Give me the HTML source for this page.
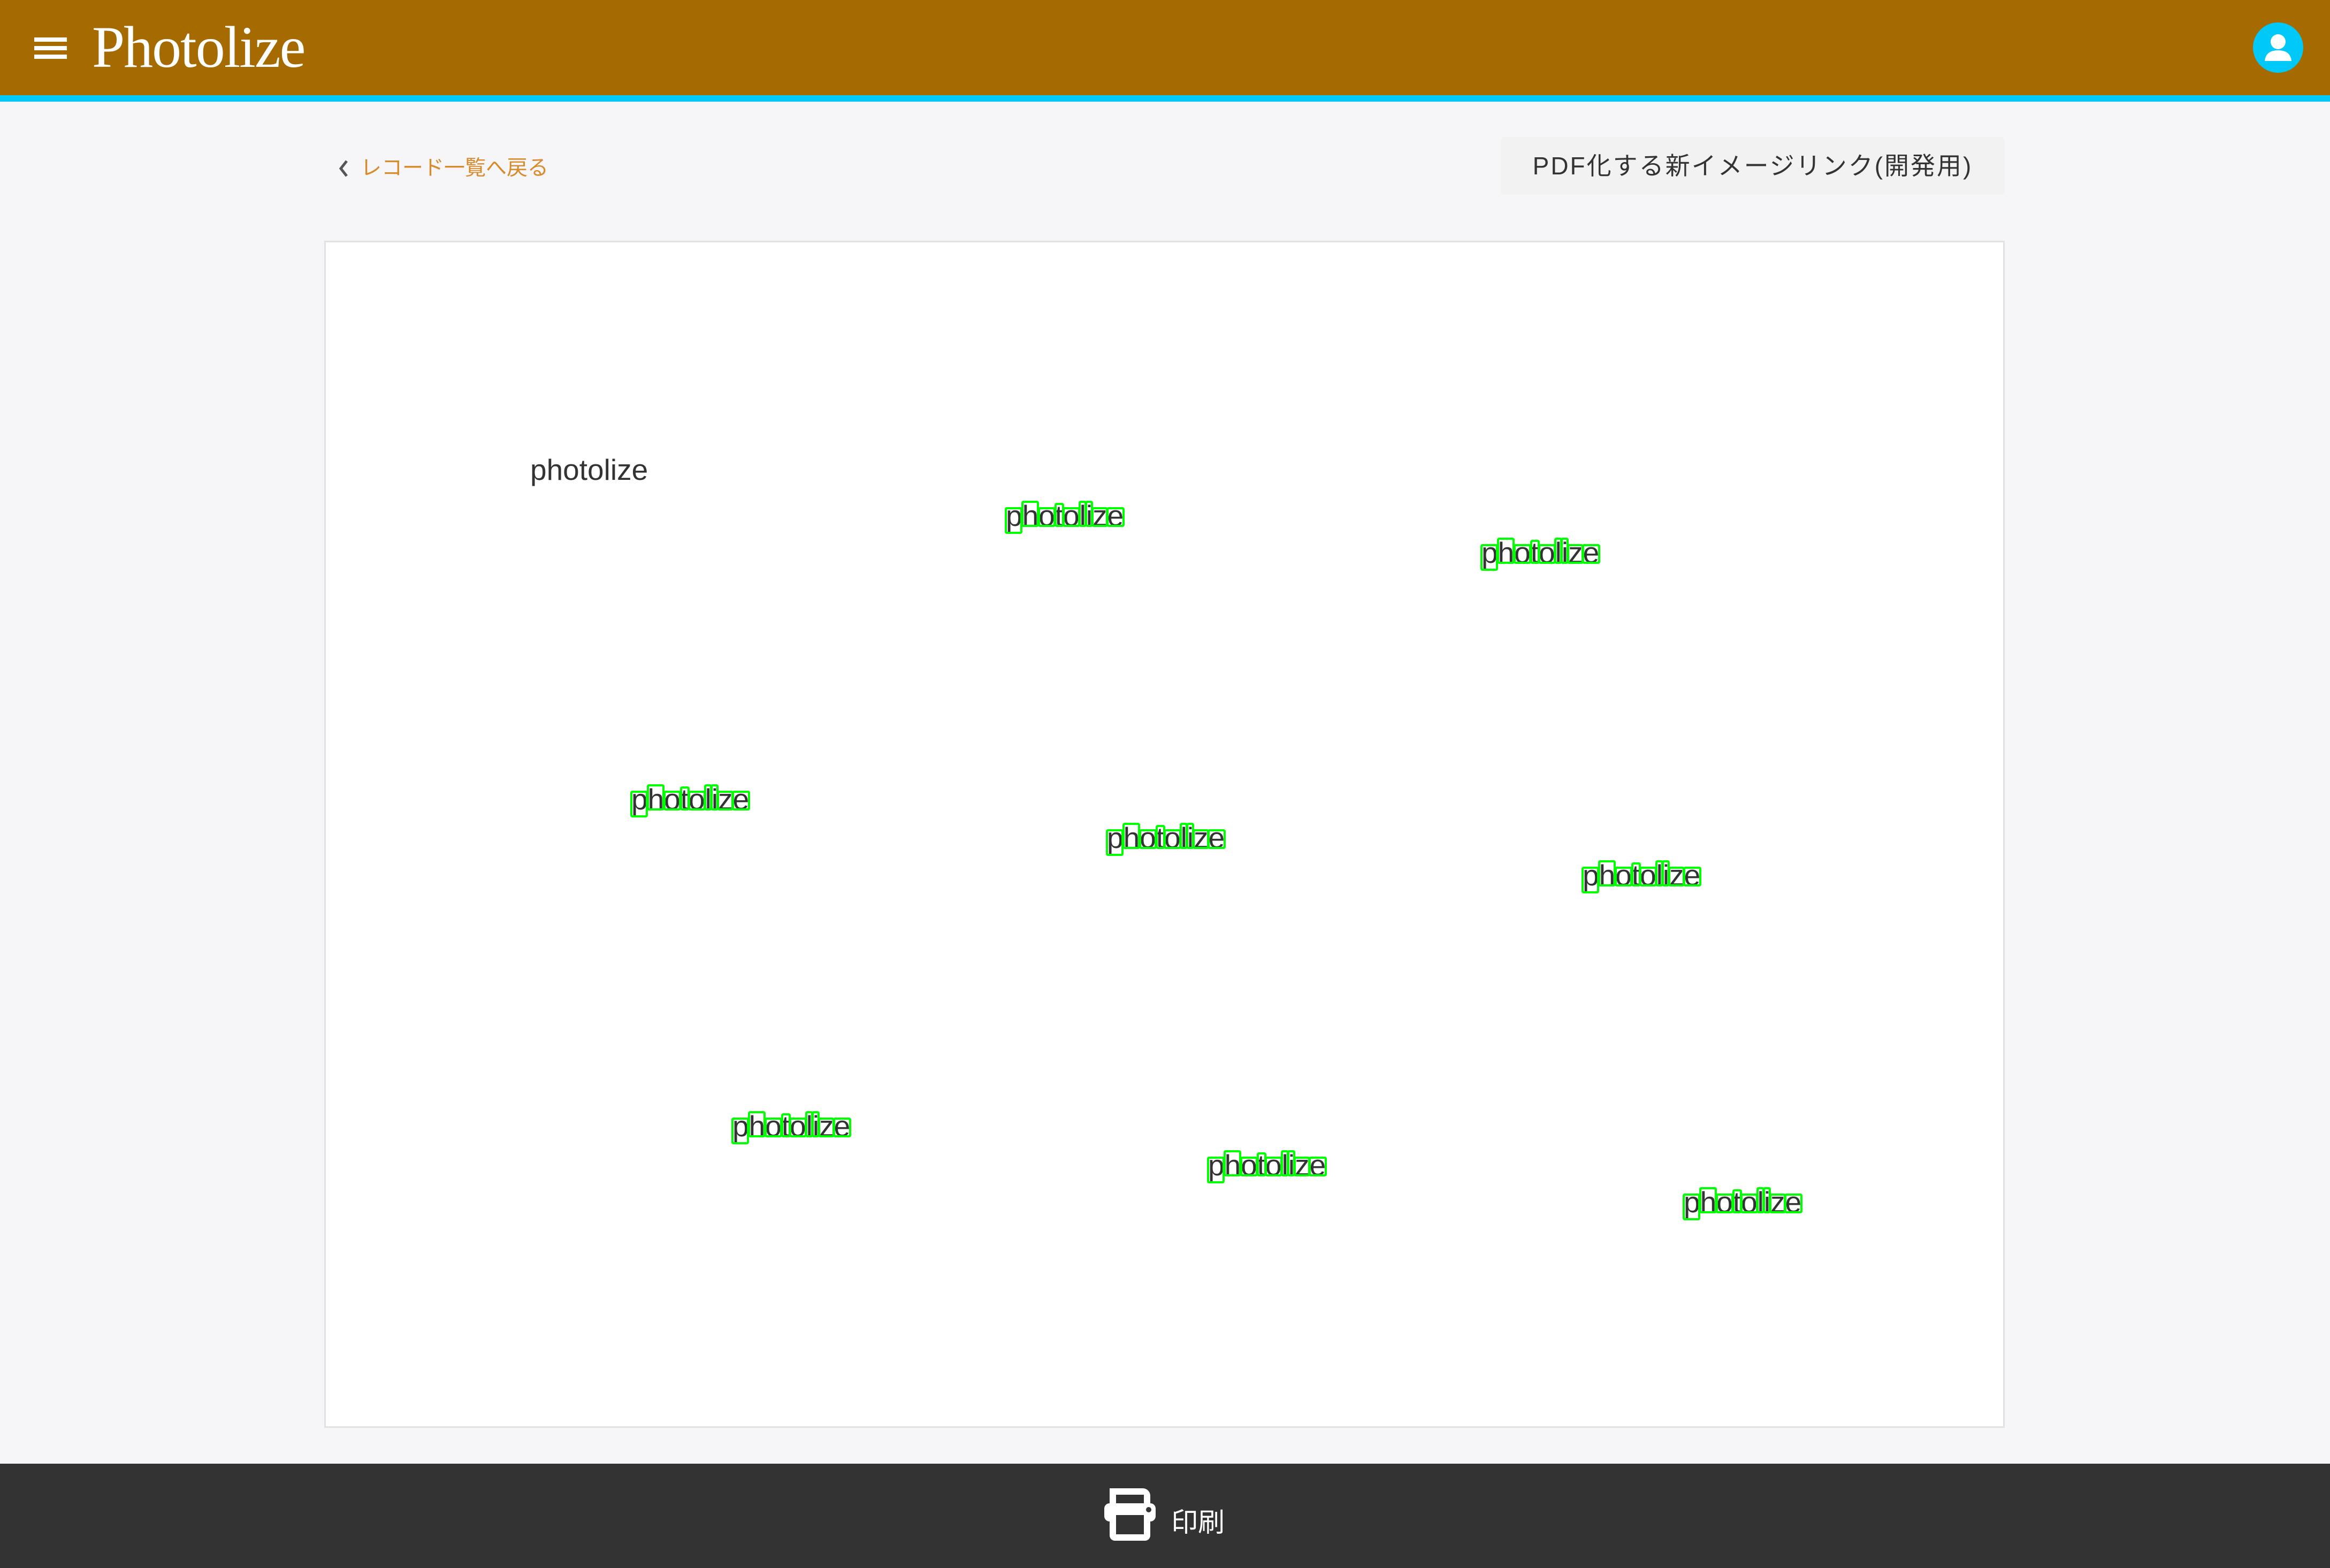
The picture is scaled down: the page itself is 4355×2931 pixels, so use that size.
<!DOCTYPE html>
<html><head><meta charset="utf-8"><style>
*{margin:0;padding:0;box-sizing:border-box}
body{width:4355px;height:2931px;background:#f6f6f8;position:relative;overflow:hidden;font-family:"Liberation Sans","Noto Sans CJK JP",sans-serif}
.hdr{position:absolute;left:0;top:0;width:4355px;height:178px;background:#a56a00}
.bl{position:absolute;left:0;top:178px;width:4355px;height:12px;background:#00c8f8}
.ham{position:absolute;left:64px;width:61px;height:8px;background:#fff}
.logo{position:absolute;left:172px;top:22px;font-family:"Liberation Serif",serif;font-size:110px;color:#fff;line-height:1.2;letter-spacing:-2px}
.av{position:absolute;left:4211px;top:42px;width:94px;height:94px;border-radius:50%;background:#00c8f8;overflow:hidden}
.back{position:absolute;left:628px;top:283px;font-size:39px;color:#d98a2a}
.btn{position:absolute;left:2805px;top:256px;width:942px;height:108px;background:#f2f2f3;border-radius:6px;font-size:46px;color:#333;line-height:108px;text-align:center;letter-spacing:3px}
.panel{position:absolute;left:606px;top:450px;width:3141px;height:2219px;background:#fff;border:3px solid #e2e2e2}
.ft{position:absolute;left:0;top:2736px;width:4355px;height:195px;background:#333}
.g{position:absolute;width:0;height:0}
.g .t{position:absolute;left:0;top:-46px;font-size:55px;line-height:55px;color:#333;white-space:nowrap}
.g b{position:absolute;border:4px solid #00ff00;border-radius:4px}
.x{top:-35px;height:37px}.a{top:-47px;height:49px}.d{top:-35px;height:50px}.tt{top:-43px;height:45px}
</style></head><body>
<div class="hdr"></div><div class="bl"></div>
<div class="ham" style="top:70px"></div><div class="ham" style="top:86px"></div><div class="ham" style="top:102px"></div>
<div class="logo">Photolize</div>
<div class="av"><svg width="94" height="94" viewBox="0 0 94 94"><circle cx="47" cy="36" r="14" fill="#fff"/><path d="M22 72 Q24 52 47 52 Q70 52 72 72 Z" fill="#fff"/></svg></div>
<div class="back"><svg width="30" height="40" viewBox="0 0 30 40" style="vertical-align:-8px;margin-right:16px"><path d="M20 6 L9 20 L20 34" stroke="#555" stroke-width="5" fill="none"/></svg>レコード一覧へ戻る</div>
<div class="btn">PDF化する新イメージリンク(開発用)</div>
<div class="panel"></div>
<div class="g" style="left:991px;top:897px"><div class="t">photolize</div></div>

<!-- template groups -->
<div class="g" style="left:1880px;top:983px"><div class="t">photolize</div><b class="d" style="left:-2px;width:33px"></b><b class="a" style="left:29px;width:33px"></b><b class="x" style="left:60px;width:33px"></b><b class="tt" style="left:91px;width:18px"></b><b class="x" style="left:106px;width:33px"></b><b class="a" style="left:136px;width:15px"></b><b class="a" style="left:148px;width:15px"></b><b class="x" style="left:160px;width:31px"></b><b class="x" style="left:188px;width:34px"></b></div>
<div class="g" style="left:2769px;top:1052px"><div class="t">photolize</div><b class="d" style="left:-2px;width:33px"></b><b class="a" style="left:29px;width:33px"></b><b class="x" style="left:60px;width:33px"></b><b class="tt" style="left:91px;width:18px"></b><b class="x" style="left:106px;width:33px"></b><b class="a" style="left:136px;width:15px"></b><b class="a" style="left:148px;width:15px"></b><b class="x" style="left:160px;width:31px"></b><b class="x" style="left:188px;width:34px"></b></div>
<div class="g" style="left:1180px;top:1513px"><div class="t">photolize</div><b class="d" style="left:-2px;width:33px"></b><b class="a" style="left:29px;width:33px"></b><b class="x" style="left:60px;width:33px"></b><b class="tt" style="left:91px;width:18px"></b><b class="x" style="left:106px;width:33px"></b><b class="a" style="left:136px;width:15px"></b><b class="a" style="left:148px;width:15px"></b><b class="x" style="left:160px;width:31px"></b><b class="x" style="left:188px;width:34px"></b></div>
<div class="g" style="left:2069px;top:1585px"><div class="t">photolize</div><b class="d" style="left:-2px;width:33px"></b><b class="a" style="left:29px;width:33px"></b><b class="x" style="left:60px;width:33px"></b><b class="tt" style="left:91px;width:18px"></b><b class="x" style="left:106px;width:33px"></b><b class="a" style="left:136px;width:15px"></b><b class="a" style="left:148px;width:15px"></b><b class="x" style="left:160px;width:31px"></b><b class="x" style="left:188px;width:34px"></b></div>
<div class="g" style="left:2958px;top:1655px"><div class="t">photolize</div><b class="d" style="left:-2px;width:33px"></b><b class="a" style="left:29px;width:33px"></b><b class="x" style="left:60px;width:33px"></b><b class="tt" style="left:91px;width:18px"></b><b class="x" style="left:106px;width:33px"></b><b class="a" style="left:136px;width:15px"></b><b class="a" style="left:148px;width:15px"></b><b class="x" style="left:160px;width:31px"></b><b class="x" style="left:188px;width:34px"></b></div>
<div class="g" style="left:1369px;top:2124px"><div class="t">photolize</div><b class="d" style="left:-2px;width:33px"></b><b class="a" style="left:29px;width:33px"></b><b class="x" style="left:60px;width:33px"></b><b class="tt" style="left:91px;width:18px"></b><b class="x" style="left:106px;width:33px"></b><b class="a" style="left:136px;width:15px"></b><b class="a" style="left:148px;width:15px"></b><b class="x" style="left:160px;width:31px"></b><b class="x" style="left:188px;width:34px"></b></div>
<div class="g" style="left:2258px;top:2197px"><div class="t">photolize</div><b class="d" style="left:-2px;width:33px"></b><b class="a" style="left:29px;width:33px"></b><b class="x" style="left:60px;width:33px"></b><b class="tt" style="left:91px;width:18px"></b><b class="x" style="left:106px;width:33px"></b><b class="a" style="left:136px;width:15px"></b><b class="a" style="left:148px;width:15px"></b><b class="x" style="left:160px;width:31px"></b><b class="x" style="left:188px;width:34px"></b></div>
<div class="g" style="left:3147px;top:2266px"><div class="t">photolize</div><b class="d" style="left:-2px;width:33px"></b><b class="a" style="left:29px;width:33px"></b><b class="x" style="left:60px;width:33px"></b><b class="tt" style="left:91px;width:18px"></b><b class="x" style="left:106px;width:33px"></b><b class="a" style="left:136px;width:15px"></b><b class="a" style="left:148px;width:15px"></b><b class="x" style="left:160px;width:31px"></b><b class="x" style="left:188px;width:34px"></b></div>

<div class="ft"></div>
<svg style="position:absolute;left:2060px;top:2778px" width="104" height="104" viewBox="0 0 104 104">
<path d="M14 32 H90 a10 10 0 0 1 10 10 V56 a10 10 0 0 1 -10 10 H14 a10 10 0 0 1 -10 -10 V42 a10 10 0 0 1 10 -10Z" fill="#fff"/>
<path d="M14 4 H76 a14 14 0 0 1 14 14 V32 H78 V16 H26 V32 H14Z" fill="#fff"/>
<path d="M14 54 H90 V92 a10 10 0 0 1 -10 10 H24 a10 10 0 0 1 -10 -10Z" fill="#fff"/>
<rect x="26" y="54" width="52" height="36" fill="#333"/>
<circle cx="87" cy="44" r="5" fill="#333"/>
</svg>
<div style="position:absolute;left:2189px;top:2816px;font-size:50px;color:#fff;line-height:60px">印刷</div>
</body></html>
